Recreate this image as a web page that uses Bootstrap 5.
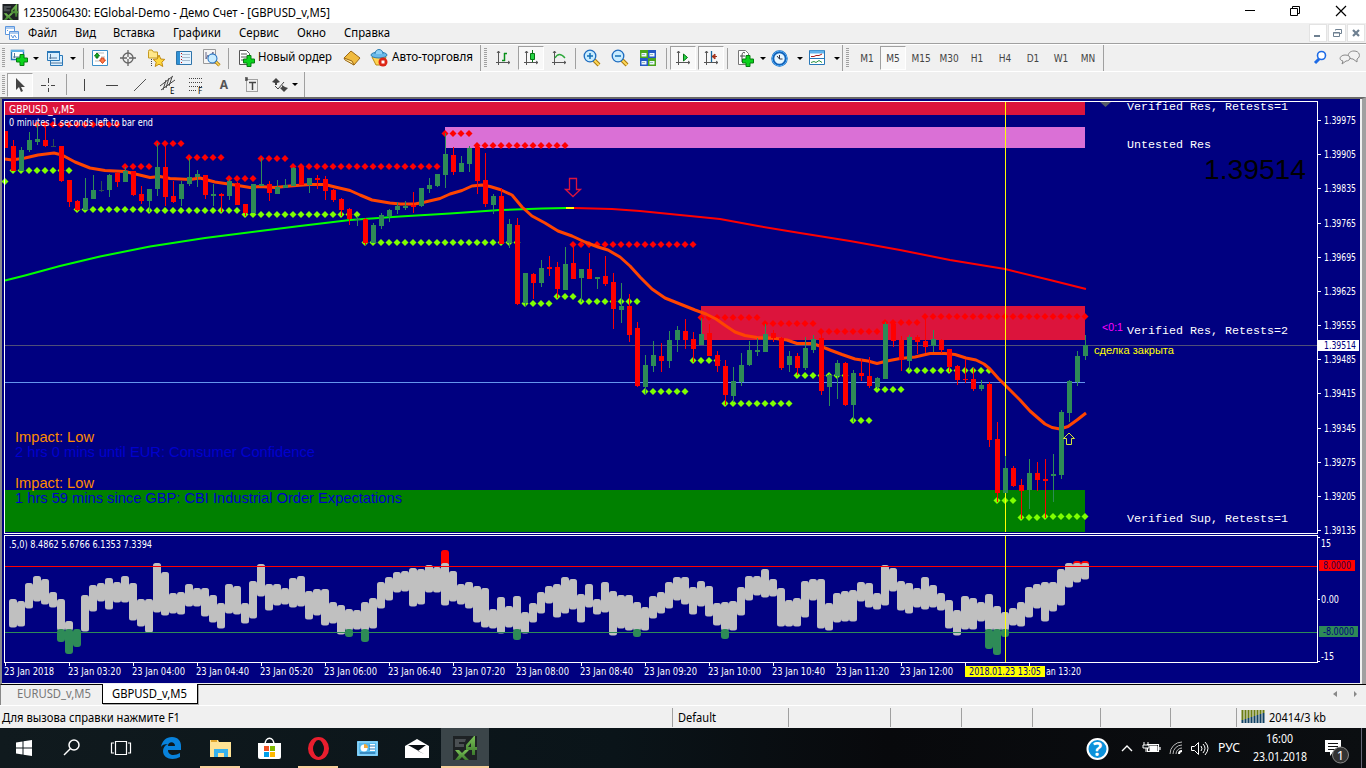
<!DOCTYPE html>
<html lang="ru"><head><meta charset="utf-8"><title>EGlobal-Demo</title>
<link href="https://cdn.jsdelivr.net/npm/bootstrap@5.3.0/dist/css/bootstrap.min.css" rel="stylesheet">
<script src="https://cdn.jsdelivr.net/npm/bootstrap@5.3.0/dist/js/bootstrap.bundle.min.js"></script>
<style>
body{width:1366px;height:768px;overflow:hidden;background:#f0f0f0;color:#000;font:12px/16px "Noto Sans","Open Sans",sans-serif}
svg{display:block;flex:none;overflow:visible}
svg text{white-space:pre}
.titlebar{height:23px;background:#fff;padding-left:2px}
.wbtn{width:46px}
.menubar{height:21px;border-bottom:1px solid #a0a0a0;padding-left:4px}
.mdi{width:18px;height:18px;background:#fff;border:1px solid #e3e3e3;margin-right:1px}
.toolrow{height:27px;border-top:1px solid #fff}
.toolgroup{height:27px;border-right:1px solid #a0a0a0;border-bottom:1px solid #a0a0a0}
.grip{width:3px;height:20px;margin:0 2px;background:repeating-linear-gradient(#a0a0a0 0 1px,#f0f0f0 1px 2px)}
.cell{display:flex;align-items:center;justify-content:center;width:28px;height:24px;flex:none}
.pressed{width:26px;margin:0 1px;background:#f8f8f8;border:1px solid #a0a0a0;border-right-color:#fff;border-bottom-color:#fff}
.sep{width:1px;height:21px;background:#a0a0a0;margin:0 2px;flex:none}
.dd{width:0;height:0;border:3px solid transparent;border-top-color:#000;border-bottom:0;flex:none}
.tf{font:10px "DejaVu Sans Condensed",sans-serif;color:#444}
.frame{height:587px;border-top:2px solid #696969;border-left:2px solid #8a8a8a;border-right:4px solid #a0a0a0;background:#f0f0f0}
.tabstrip{height:21px}
.tab1{width:102px;border-top:1px solid #000;border-left:1px solid #888;padding-left:16px}
.tab2{width:96px;background:#fff;border:solid #000;border-width:0 1px 1px 1px;box-shadow:1px 1px #aaa;height:20px}
.tabrest{border-top:1px solid #000}
.statusbar{height:23px;border-top:1px solid #fff}
.stcell{border-left:1px solid #a0a0a0;height:19px;flex:none}
.taskbar{height:40px;background:linear-gradient(90deg,#101a1e,#0a1419 45%,#08090c 65%,#0b0e11);color:#fff}
.task{height:40px;width:49px;flex:none;display:flex;align-items:center;justify-content:center}
.opened{box-shadow:inset 0 -2px #f8cf9c;width:40px;margin:0 5px 0 4px}
.current{background:#3b4549;box-shadow:inset 0 -2px #f8cf9c;width:48px}
</style></head><body class="d-flex flex-column">
<svg width="0" height="0" class="position-absolute"><defs>
<symbol id="plus" viewBox="0 0 12 12"><path d="M4 0.5h4v3.5h3.5v4H8v3.5H4V8H.5V4H4z" fill="#0bd21c" stroke="#077d10"/></symbol>
<symbol id="axes" viewBox="0 0 16 16"><path d="M3.5 1v14M1 12.5h14M2 3l1.5-2L5 3M13 11l2 1.500-2 1.500" fill="none" stroke="#555"/></symbol>
<symbol id="lens" viewBox="0 0 18 18"><path d="M11 11l5 5" stroke="#a87910" stroke-width="4"/><path d="M11 11l5 5" stroke="#ffd858" stroke-width="2"/><circle cx="7" cy="7" r="5.800" fill="#c8ecff" stroke="#1d6cc0" stroke-width="1.300"/></symbol>
<linearGradient id="leaf" x2="0" y2="1"><stop stop-color="#7ac257"/><stop offset="1" stop-color="#3c7a2c"/></linearGradient>
<symbol id="fx" viewBox="0 0 24 24"><path fill="#1e2224" d="M0 0h24v24H0z"/><path d="M2 3h11l-1 3H6v2h5v3H2z" fill="#4b5053"/><path d="M21 0l-8 9v5h6v5h3v-5h2v-3h-2V0zM18 11h-3l3-4z" fill="url(#leaf)"/><path d="M2 14h4l3 3 3-3h4l-5 5 5 5h-4l-3-3-3 3H2l4-5z" fill="url(#leaf)"/></symbol>
</defs></svg>

<header class="titlebar d-flex align-items-center">
<svg width="17" height="16"><use href="#fx" width="17" height="16"/></svg>
<svg width="330" height="22" class="ms-1"><text x="0" y="16" textLength="307" lengthAdjust="spacingAndGlyphs">1235006430: EGlobal-Demo - Демо Счет - [GBPUSD_v,M5]</text></svg>
<div class="d-flex ms-auto"><svg class="wbtn" height="20"><path d="M17 8.500h10" stroke="#000"/></svg><svg class="wbtn" height="20"><path d="M16.500 6.500h7v7h-7zM18.500 6.500v-2h7v7h-2" fill="none" stroke="#000"/></svg><svg class="wbtn" height="20"><path d="M16 4l10 10M26 4L16 14" stroke="#000" stroke-width="1.200"/></svg></div></header>

<nav class="menubar d-flex align-items-center">
<svg width="16" height="16" fill="#fff" stroke="#5d97de"><path d="M1.500 1.500h9v8h-9z"/><path d="M1 3h10M5.500 6.500h9v8h-9zM5 8h10M7 10l2 3 1.500-3 2 3"/><path d="M3 6l1-1" /></svg>
<svg width="390" height="20"><g font-size="12"><text x="8" y="14" textLength="29" lengthAdjust="spacingAndGlyphs">Файл</text><text x="55" y="14" textLength="21" lengthAdjust="spacingAndGlyphs">Вид</text><text x="93" y="14" textLength="42" lengthAdjust="spacingAndGlyphs">Вставка</text><text x="153" y="14" textLength="48" lengthAdjust="spacingAndGlyphs">Графики</text><text x="219" y="14" textLength="40" lengthAdjust="spacingAndGlyphs">Сервис</text><text x="277" y="14" textLength="29" lengthAdjust="spacingAndGlyphs">Окно</text><text x="324" y="14" textLength="46" lengthAdjust="spacingAndGlyphs">Справка</text></g></svg>
<div class="d-flex ms-auto"><div class="mdi"><svg width="16" height="16"><path d="M4 11h6" stroke="#6e8091" stroke-width="2"/></svg></div><div class="mdi"><svg width="16" height="16" fill="none" stroke="#6e8091"><path d="M4.500 7.500h6v4h-6zM4 8h7M6.500 5.500v-1h6v4h-2"/></svg></div><div class="mdi"><svg width="16" height="16"><path d="M5 5l6 6M11 5l-6 6" stroke="#6e8091" stroke-width="2.200"/></svg></div></div></nav>

<section class="toolrow d-flex">
<div class="toolgroup d-flex align-items-center" style="width:481px"><div class="grip"></div>
<div class="cell" style="width:23px"><svg width="18" height="18"><path d="M1.500 1.500h12v9h-12z" fill="#fff" stroke="#2877b8" stroke-width="1.400"/><path d="M1 2h13" stroke="#5bb0e8" stroke-width="2"/><path d="M4.500 4v5M3 8h7" stroke="#579"/><use href="#plus" x="6" y="5" width="12" height="12"/></svg></div><div class="cell" style="width:11px"><i class="dd"></i></div>
<div class="cell" style="width:28px"><svg width="18" height="18" fill="#d9efff" stroke="#2877b8"><path d="M4.500 6.500h12v10h-12z"/><path d="M1.500 2.500h12v9h-12z"/><path d="M1 3h13" stroke-width="2"/><path d="M4.500 5v5M3 9h8M4 14h12" stroke="#579"/></svg></div><div class="cell" style="width:8px"><i class="dd"></i></div><div style="width:4px"></div><div class="sep"></div>
<div class="cell"><svg width="16" height="16"><path d="M.5.5h15v15H.5z" fill="#fff" stroke="#3b8fca"/><path d="M12 3H4M13 7H9M8 11H3" stroke="#bbb"/><path d="M5 3L2.500 6H4v2h2V6h1.500z" fill="#12ae23" stroke="#0a7515"/><path d="M10.500 13.500L13.500 10H12V8H9v2H7.500z" fill="#ff7a48" stroke="#d2451b"/></svg></div>
<div class="cell"><svg width="16" height="16" fill="none" stroke="#666" stroke-width="1.300"><circle cx="8" cy="8" r="5"/><path d="M8 0v7M8 9v7M0 8h7M9 8h7"/></svg></div>
<div class="cell"><svg width="18" height="18"><path d="M1.500 2.500V9h9V3h-4L5 1H2z" fill="#ffe78a" stroke="#c59a20"/><path d="M4.500 10v7" stroke="#444" stroke-dasharray="1"/><path d="M12 6l1.800 4 4 .4-3 2.800 1 4.300-3.800-2.300-3.800 2.300 1-4.300-3-2.800 4-.4z" fill="#ffd83e" stroke="#c28b12"/></svg></div>
<div class="cell"><svg width="16" height="16"><path d="M.5 1.500h15v13H.5z" fill="#e5f3ff" stroke="#2e74aa"/><path d="M1 2h3v12H1z" fill="#2f91d5"/><path d="M6 4.500h8M6 7.500h8M6 10.500h8" stroke="#a8bccd"/><path d="M5.500 3v10" stroke="#b11" stroke-dasharray="1 2"/></svg></div>
<div class="cell"><svg width="18" height="18"><path d="M.5.500h12v14H.5z" fill="#f5f5f5" stroke="#999"/><path d="M3 3v7l2-4 2 3 3-6v5" fill="none" stroke="#668"/><use href="#lens" x="4" y="4" width="14" height="14"/></svg></div><div class="sep"></div>
<div class="cell" style="width:30px"><svg width="18" height="18"><path d="M2.500 1.500h7l3 3v11h-10z" fill="#fff" stroke="#555"/><path d="M4 5h6M4 8h6M4 11h6" stroke="#555"/><use href="#plus" x="6" y="6" width="12" height="12"/></svg></div>
<svg width="76" height="20"><text x="-3" y="13" textLength="74" lengthAdjust="spacingAndGlyphs">Новый ордер</text></svg>
<div class="cell" style="width:30px"><svg width="18" height="18"><path d="M1 9l7-7 9 7-6 7z" fill="#f0bb3f" stroke="#9b6815"/><path d="M1 9l8 3 2 4-9-5z" fill="#ffe9a0" stroke="#9b6815"/></svg></div>
<div class="cell" style="width:23px"><svg width="18" height="18"><path d="M2 8l4 8h7l3-8z" fill="#ffd450" stroke="#b78b18"/><ellipse cx="9" cy="6" rx="8" ry="3" fill="#69b9e8" stroke="#2d7fb3"/><path d="M5 5c0-6 8-6 8 0" fill="#8fd0f4" stroke="#2d7fb3"/><circle cx="13" cy="13" r="4.500" fill="#dd2617"/><path d="M11.500 11.500h3v3h-3z" fill="#fff"/></svg></div>
<svg width="84" height="20"><text x="2" y="13" textLength="81" lengthAdjust="spacingAndGlyphs">Авто-торговля</text></svg></div>

<div class="toolgroup d-flex align-items-center" style="width:362px"><div class="grip" style="margin-left:3px"></div>
<div class="cell"><svg width="16" height="16"><use href="#axes"/><path d="M9.500 3v8M9 3.500h3M7 10.500h3" stroke="#078f18" stroke-width="1.500"/></svg></div>
<div class="cell pressed"><svg width="16" height="16"><use href="#axes"/><path d="M9.500 0v12" stroke="#087315"/><path d="M7.500 3.500h4v6h-4z" fill="#25d443" stroke="#087315"/></svg></div>
<div class="cell"><svg width="16" height="16"><use href="#axes"/><path d="M4 8q4-7 10 0" fill="none" stroke="#2ca83a" stroke-width="1.300"/></svg></div><div class="sep"></div>
<div class="cell"><svg width="18" height="18"><use href="#lens"/><path d="M4 7h6M7 4v6" stroke="#146fb6" stroke-width="1.500"/></svg></div><div class="cell"><svg width="18" height="18"><use href="#lens"/><path d="M4 7h6" stroke="#146fb6" stroke-width="1.500"/></svg></div>
<div class="cell"><svg width="16" height="16"><path d="M0 0h8v8H0zM8 8h8v8H8z" fill="#4aa51c"/><path d="M8 0h8v8H8zM0 8h8v8H0z" fill="#2459c5"/><path d="M1.500 3h5v3.500h-5zM9.500 3h5v3.500h-5zM1.500 11h5v3.500h-5zM9.500 11h5v3.500h-5z" fill="#eef7ff"/><path d="M2 4.500h3M10 4.500h3M2 12.500h3M10 12.500h3" stroke="#9bb"/></svg></div><div class="sep ms-1"></div>
<div class="cell pressed"><svg width="16" height="16"><use href="#axes"/><path d="M8.500 4v7l4-3.500z" fill="#25d443" stroke="#087315"/></svg></div>
<div class="cell pressed"><svg width="16" height="16"><use href="#axes"/><path d="M8.500 1v11" stroke="#17669a" stroke-width="1.300"/><path d="M9 6.500h5M12 4l-3 2.500L12 9z" fill="#d42" stroke="#9c321c"/></svg></div><div class="sep"></div>
<div class="cell" style="width:30px"><svg width="18" height="18"><path d="M2.500 1.500h7l3 3v11h-10z" fill="#fff" stroke="#777"/><path d="M9 4c-3-2-3 2-3 4v5M4 7h5" fill="none" stroke="#444"/><use href="#plus" x="6" y="6" width="12" height="12"/></svg></div><div class="cell" style="width:5px"><i class="dd"></i></div>
<div class="cell" style="width:33px"><svg width="17" height="17" style="margin-right:4px"><circle cx="8.500" cy="8.500" r="6.700" fill="#e7f6ff" stroke="#1262b9" stroke-width="3"/><circle cx="8.500" cy="8.500" r="7.400" fill="none" stroke="#50acf5"/><path d="M8.500 5v4h3M6 6l2.500 3" stroke="#334" fill="none"/></svg></div><div class="cell" style="width:4px"><i class="dd"></i></div>
<div class="cell" style="width:33px"><svg width="16" height="16" style="margin-right:4px"><path d="M.5.5h15v14H.5z" fill="#fff" stroke="#2877b8"/><path d="M1 2h14" stroke="#62b4ec" stroke-width="3"/><path d="M2 6.500h3l2-1h3l3-1.500" fill="none" stroke="#a22"/><path d="M1 8.500h14" stroke="#2877b8"/><path d="M2 12.500l3-1 2 1 3-2 3 2" fill="none" stroke="#2a943e"/></svg></div><div class="cell" style="width:4px"><i class="dd"></i></div></div>
<div class="toolgroup d-flex align-items-center tf" style="width:261px"><div class="grip" style="margin-left:3px"></div><div class="cell ps-1">M1</div><div class="cell pressed">M5</div><div class="cell">M15</div><div class="cell">M30</div><div class="cell">H1</div><div class="cell">H4</div><div class="cell">D1</div><div class="cell">W1</div><div class="cell" style="width:26px">MN</div></div>
<div class="d-flex ms-auto align-items-center pe-1"><svg width="16" height="16" fill="none"><path d="M1 13l5-5" stroke="#1d6be6" stroke-width="3"/><circle cx="7.500" cy="5.500" r="4" fill="#fff" stroke="#1d6be6" stroke-width="1.600"/></svg><svg width="24" height="20" class="ms-2" fill="#f2f2f2" stroke="#888"><path d="M15 11l4 3v-3c4-2 3-8-3-8-7 0-8 8-1 8z"/><path d="M4 16l1-3c-5-1-3-6 2-6 7 0 6 6 1 6z"/></svg></div></section>

<section class="toolrow d-flex" style="height:26px"><div class="toolgroup d-flex align-items-center" style="width:305px;height:26px"><div class="grip"></div>
<div class="cell pressed ms-0"><svg width="16" height="16"><path d="M4 1v12l3-3 2 5 2-1-2-4h4z" fill="#444"/></svg></div>
<div class="cell"><svg width="16" height="16" stroke="#444"><path d="M8.500 1v5M8.500 11v4M1 8.500h5M11 8.500h4M8 8.500h1"/></svg></div><div style="width:2px"></div><div class="sep"></div>
<div class="cell" style="width:29px"><svg width="16" height="16"><path d="M8.500 2v12" stroke="#444"/></svg></div><div class="cell"><svg width="16" height="16"><path d="M2 8.500h12" stroke="#444"/></svg></div><div class="cell"><svg width="16" height="16"><path d="M2 14L14 2" stroke="#555"/></svg></div>
<div class="cell"><svg width="16" height="18" stroke="#444"><path d="M0 10L13 0M1 14L15 4M3 14L6 4M6 12L9 2M9 10l3-9"/><text x="10" y="18" font-size="8" stroke="none">E</text></svg></div>
<div class="cell"><svg width="16" height="18" stroke="#444"><path d="M1 2.500h14M1 6.500h14M1 10.500h14M1 14.500h8" stroke-dasharray="1"/><text x="10" y="18" font-size="8" stroke="none">F</text></svg></div>
<div class="cell fw-bold" style="color:#555">A</div><div class="cell"><svg width="16" height="16"><path d="M2.500 2.500h11v12h-11z" fill="none" stroke="#555" stroke-dasharray="1"/><path d="M5 5.500h7M8.500 5v8M1 1h2v2H1" stroke="#444" stroke-width="1.500" fill="none"/></svg></div>
<div class="cell"><svg width="16" height="16" fill="#444"><path d="M0 5l4-4 4 4-3 1v2H3V6zM8 11l2-1V8l3 2 3 1-4 4z"/><path d="M3 9l3 3 6-7" fill="none" stroke="#444"/></svg></div><div class="cell" style="width:10px;margin-left:-4px"><i class="dd"></i></div></div></section>

<main class="frame"><svg id="chart" width="1358" height="584" viewBox="2 99 1358 584" font-family="DejaVu Sans Condensed,sans-serif" font-size="10"></svg></main>

<div class="tabstrip d-flex"><div class="tab1"><svg width="80" height="18"><text x="0" y="13" fill="#777" textLength="74" lengthAdjust="spacingAndGlyphs">EURUSD_v,M5</text></svg></div><div class="tab2"><svg width="90" height="18"><text x="9" y="14" textLength="75" lengthAdjust="spacingAndGlyphs">GBPUSD_v,M5</text></svg></div><div class="tabrest flex-grow-1 d-flex justify-content-end"><svg width="36" height="18" fill="#888"><path d="M7 6v6L3 9zM24 6v6l3-3z"/></svg></div></div>
<div class="statusbar d-flex align-items-center"><svg width="672" height="20"><text x="2" y="15" textLength="178" lengthAdjust="spacingAndGlyphs">Для вызова справки нажмите F1</text></svg><div class="stcell" style="width:116px"><svg width="80" height="18"><text x="5" y="14" textLength="38" lengthAdjust="spacingAndGlyphs">Default</text></svg></div><div class="stcell" style="width:102px"></div><div class="stcell" style="width:71px"></div><div class="stcell" style="width:71px"></div><div class="stcell" style="width:68px"></div><div class="stcell" style="width:70px"></div><div class="stcell" style="width:66px"></div><div class="stcell"><svg width="125" height="18"><g id="signal"></g><text x="32" y="14" textLength="57" lengthAdjust="spacingAndGlyphs">20414/3 kb</text></svg></div></div>

<footer class="taskbar d-flex">
<div class="task" style="width:48px"><svg width="16" height="16" fill="#fff"><path d="M0 2.500l6.500-1v6H0zM7.500 1.300L16 0v7.500H7.500zM0 8.500h6.500v6L0 13.500zM7.500 8.500H16V16l-8.500-1.300z"/></svg></div>
<div class="task" style="width:48px"><svg width="18" height="18" fill="none" stroke="#fff" stroke-width="1.500"><circle cx="11" cy="6" r="5"/><path d="M7.500 9.500L1 16"/></svg></div>
<div class="task" style="width:49px"><svg width="20" height="16" fill="none" stroke="#fff" stroke-width="1.200"><path d="M4.500 1.500h11v13h-11zM3 3H.5v10H3M17 3h2.500v10H17"/></svg></div>
<div class="task" style="width:51px"><svg width="20" height="22" viewBox="0 0 20 22"><path d="M0 10C1 4 5 0 11 0c6 0 9 4 9 9v4H7c0 6 7 6 12 3v4c-7 4-17 2-17-6 0-3 2-6 5-7-4 0-6 1-7 3zm7-1h7c0-5-7-5-7 0z" fill="#0882dc"/></svg></div>
<div class="task opened"><svg width="21" height="18"><path d="M0 1h8l1 2h12v15H0z" fill="#ffe394"/><path d="M1 1h6v2H1z" fill="#e2a72c"/><path d="M4 18v-8h14v8h-4v-4H8v4z" fill="#36b2ed"/></svg></div>
<div class="task"><svg width="23" height="22"><path d="M7 8c0-9 9-9 9 0" fill="none" stroke="#fff" stroke-width="1.500"/><path d="M0 6h23v14q0 2-2 2H2q-2 0-2-2z" fill="#fff"/><path d="M6 9h5v5H6z" fill="#ef5023"/><path d="M12 9h5v5h-5z" fill="#7fb900"/><path d="M6 15h5v5H6z" fill="#009fe9"/><path d="M12 15h5v5h-5z" fill="#ffb800"/></svg></div>
<div class="task opened"><svg width="23" height="23"><ellipse cx="11.500" cy="11.500" rx="8" ry="9" fill="none" stroke="#e91e2e" stroke-width="5"/><ellipse cx="11.500" cy="11.500" rx="5" ry="8.500" fill="#0a1419"/></svg></div>
<div class="task"><svg width="21" height="15"><path d="M0 0h21v15H0z" fill="#55b8ec"/><path d="M1 1h19v13H1z" fill="none" stroke="#a8e1ff"/><circle cx="7" cy="7" r="3.500" fill="#fff"/><path d="M7 7V3a4 4 0 014 4z" fill="#f4aa39"/><path d="M13 3h5v7h-5z" fill="#fff"/><path d="M12 5h6M12 8h6" stroke="#2b78b5"/><path d="M3 12h15" stroke="#1e5d96"/></svg></div>
<div class="task"><svg width="24" height="19"><path d="M0 7l12-7 12 7v12H0z" fill="#fff"/><path d="M3 6h18l-8 6 6 3z" fill="#0a1014"/></svg></div>
<div class="task current"><svg width="24" height="24"><use href="#fx" width="24" height="24"/></svg></div>
<svg class="ms-auto" width="286" height="40" fill="none" stroke="#fff"><circle cx="17.500" cy="21" r="10" fill="#0c91da" stroke-width="2"/><text x="17.500" y="28" text-anchor="middle" font-size="19" font-weight="bold" fill="#fff" stroke="none">?</text><path d="M42 23l5-5 5 5" stroke-width="1.400"/><path d="M67.500 16.500h11v7h-11zM80 19v3" stroke-width="1.200"/><path d="M70 18h7v5h-7z" fill="#fff"/><path d="M64 14v3M68 14v3M63 17h6v3h-6zM66 20v4" fill="#0a1014"/><path d="M90 26a12 12 0 0112-12M93 26a9 9 0 019-9M96 26a6 6 0 016-6" stroke="#bbb"/><path d="M99 26a3 3 0 013-3" stroke-width="2"/><path d="M111.500 18.500h3l4-4v12l-4-4h-3zM121 18q2 3 0 5M123 16q4 4 0 9M125 14q6 6 0 13"/><g fill="#fff" stroke="none"><text x="138" y="24" textLength="22" lengthAdjust="spacingAndGlyphs">РУС</text><text x="186" y="15" textLength="27" lengthAdjust="spacingAndGlyphs">16:00</text><text x="173" y="33" textLength="54" lengthAdjust="spacingAndGlyphs">23.01.2018</text></g><path d="M245 12h16v12h-8l-3 4v-4h-5z" fill="#fff" stroke="none"/><path d="M248 15.500h10M248 18.500h10M248 21.500h7" stroke="#111"/><circle cx="260.500" cy="27" r="8" fill="#333" stroke="#888"/><text x="260.500" y="32" text-anchor="middle" fill="#fff" stroke="none" font-size="13">1</text><path d="M281.500 0v40" stroke="#667"/></svg></footer>

<script>
// columns: colour, high, body top, body bottom, low (one entry per 5-minute bar)
const candles=`r131,131,148,148 r140,146,171,171 g147,150,171,171 g132,140,150,152 g124,139,142,145 r124,140,146,147 d139,146,147,147 r146,146,181,182 r180,180,202,207 r200,201,210,211
g178,198,210,210 g175,190,199,199 d181,190,191,192 g174,175,190,197 r172,173,182,187 g167,171,182,182 r171,171,195,196 r186,194,201,204 g189,189,201,212 g143,167,189,196
r143,167,197,206 r181,196,202,203 g181,184,199,206 g158,177,184,186 g170,174,177,187 r175,175,195,199 g184,194,196,206 r193,194,196,212 g179,181,196,200 r182,183,205,205
r204,204,213,216 g184,184,213,213 g158,184,186,186 r181,184,193,201 g180,187,194,194 g179,185,188,188 g167,168,186,186 r166,167,185,185 g178,178,185,193 r175,178,180,189
r176,179,191,200 r189,190,200,202 r198,199,210,216 r208,209,219,225 g216,219,220,226 r218,219,243,245 g223,225,243,243 g213,215,226,229 g209,210,216,222 g202,206,210,214
g201,206,208,210 r192,205,207,213 g188,188,206,207 g178,185,189,193 g174,174,186,187 g133,154,175,188 r147,155,172,175 g156,163,172,172 g146,148,164,172 r145,147,181,194
r153,180,204,207 g194,196,205,214 r188,196,244,244 g219,224,243,248 r218,225,304,305 g273,273,303,306 r273,274,283,299 g260,268,283,287 r256,267,269,276 r262,267,289,298
g247,264,290,290 r244,263,279,279 g269,269,278,302 r253,269,279,279 g277,277,279,289 r256,276,284,286 r273,282,309,329 g283,306,310,323 r294,306,335,342 r322,328,386,387
g355,365,387,394 g341,355,366,372 r343,356,361,372 g331,340,361,368 g326,330,340,352 r319,331,340,349 r332,339,349,362 g318,334,345,345 r324,333,356,356 r351,355,366,372
r360,366,395,405 g367,381,396,402 g353,365,382,386 g341,350,365,366 g338,350,352,356 g324,334,352,352 r330,333,338,342 r337,338,368,370 g351,356,365,372 r353,356,368,375
g337,348,368,370 g335,339,350,353 r332,338,391,395 g374,375,387,406 g360,363,376,399 r362,363,405,406 g370,373,405,422 r359,373,376,381 r357,376,386,388 g377,378,387,389
g322,324,379,379 r322,324,341,347 r336,340,360,371 g335,337,361,370 r335,337,342,354 r317,341,347,353 g330,339,346,352 r339,340,350,353 r349,349,367,372 r365,366,380,385
r359,379,380,383 r368,379,389,391 g380,385,389,391 r382,384,440,447 r422,439,493,502 g456,468,493,493 r466,468,486,487 r479,485,491,519 g459,473,490,509 r462,473,480,491
r459,479,481,518 g454,474,476,502 g410,412,475,479 g380,381,413,422 g351,356,382,386 g335,345,356,360`.split(/\s+/);
// support and resistance dots: first bar, last bar, y
const resist=[[4,14,124],[19,22,143],[23,27,157],[15,18,166],[28,31,178],[32,35,158],[36,54,166],[55,58,133],[59,70,145],[71,86,244],[87,94,317],[95,101,323],[102,109,331],[110,114,322],[115,135,316]];
const support=[[0,0,181],[1,8,170],[9,17,209],[18,29,210],[30,44,214],[45,64,242],[65,68,303],[69,71,296],[72,79,301],[80,85,391],[86,89,360],[90,98,403],[99,105,375],[106,108,420],[109,112,389],[113,123,370],[124,126,500],[127,129,517],[130,135,516]];
// oscillator ranges, bar 1 onward: top-bottom
const osc=`599-627 601-626 583-608 576-601 579-604 592-607 599-630 621-630 0-0 595-631 585-611 583-601 578-609 582-602 576-602 583-620 599-626 599-632 563-612 572-615 593-613 592-614 584-606 588-606 588-616 595-622 603-628 584-613 586-614 603-623 581-618 564-596 584-610 584-605 588-604 578-607 576-606 591-619 589-615 589-625 602-623 605-634 609-630 610-629 602-630 598-628 582-608 577-600 572-592 571-591 568-606 569-604 565-592 567-592 563-605 571-601 584-604 582-608 586-622 588-627 609-628 597-633 606-627 596-630 612-633 603-622 592-613 586-603 584-617 577-613 579-609 594-622 584-607 599-614 582-612 591-635 595-628 595-630 602-630 607-630 596-618 592-613 582-608 577-600 577-604 587-614 581-606 586-616 603-625 602-630 601-630 587-615 576-600 576-595 569-597 579-596 588-626 600-626 598-626 581-617 579-600 579-628 603-630 593-622 591-621 590-621 582-601 583-607 593-609 565-605 568-591 581-610 583-613 588-607 577-609 585-607 593-610 600-628 610-635 596-629 598-629 602-621 594-630 606-630 612-630 608-625 602-626 587-617 584-608 582-621 582-611 569-605 563-587 563-582 563-579`.split(' ');
const low={7:642,8:654,9:647,43:637,45:642,64:640,79:637,90:639,123:649,124:655,125:637}, high={55:550,134:561,135:561};
const X=i=>5+8*i; let s='';
const rect=(x,y,w,h,f,e='')=>s+=`<rect x="${x}" y="${y}" width="${w}" height="${h}" fill="${f}" ${e}/>`;
const text=(x,y,t,w,f='#fff',e='')=>s+=`<text x="${x}" y="${y}" fill="${f}" textLength="${w}" lengthAdjust="spacingAndGlyphs" ${e}>${t}</text>`;
const line=(p,c,w)=>s+=`<polyline points="${p}" fill="none" stroke="${c}" stroke-width="${w}" stroke-linejoin="round"/>`;
rect(2,99,1358,584,'#000080');
s+='<g shape-rendering="crispEdges">';
rect(5,102,1080,13,'#dc143c');rect(445,127,640,21,'#da70d6');rect(701,306,384,34,'#dc143c');rect(5,490,1080,42,'#008000');
rect(5,345,1312,1,'#4f4f78');rect(5,382,1080,1,'#6495ed');
s+='</g>';
const dots=(a,c)=>a.forEach(([m,n,y])=>{for(let i=m;i<=n;i++)s+=`<path d="M${X(i)-3.500} ${y+.5}l3.500-3.500 3.500 3.500-3.500 3.500z" fill="${c}"/>`});
dots(resist,'#ff0000');dots(support,'#7fff00');
line('5,280.5 25,275.5 60,266 100,256.5 150,246.5 205,238 260,231 300,226 350,220 400,216.5 450,213.5 500,210 542,208.5 567,208','#00ff00',2);
line('566,208 574,208','#ffff00',2);
line('574,208 612,209 640,211 680,215 720,219 758,226 800,233 850,241 900,250 950,260 1005,269 1050,280 1086,289','#ff0000',2);
line('5,159 12,160 25,158 38,155 54,153 62,155 75,162 90,168 105,170.5 125,171.5 150,177.5 160,176.5 170,178.5 190,179.5 200,178 215,182 235,185 250,187.5 260,186.5 275,187.5 290,186 310,184.5 325,184.5 335,187 350,190.5 360,195 372,200 390,203 400,204 415,204 425,202 440,198.5 450,194 462,190.5 472,186 482,185 490,186.5 500,189.5 512,195 522,207 532,216 545,223 558,231 572,236 585,242 598,247 608,250 620,257 630,266 640,277 652,289 665,298 675,302 685,306 695,310 706,314 716,319 726,326 735,332 745,335.5 757,337.5 772,338 787,340 797,343.5 812,343.5 820,346 830,350 842,354.5 855,359 868,361 877,363.5 887,361 900,358.5 915,357 930,353.5 945,353.5 955,354.5 966,358 976,360 984,364 990,369 998,378 1010,390 1020,400 1030,411 1038,418 1045,424 1052,427.5 1060,429 1068,426.5 1077,420 1086,413','#ff4500',3);
s+='<g shape-rendering="crispEdges">';
rect(1005,102,1,430,'#ffff00');
candles.forEach((c,i)=>{const f={r:'#ff0000',g:'#2e8b57',d:'#2f4f4f'}[c[0]],[h,a,b,l]=c.slice(1).split(',').map(Number),x=X(i);rect(x,h,1,l-h,f);const w=i?5:3;rect(i?x-2:x,a,w,Math.max(1,b-a),f)});
s+='</g>';
osc.forEach((o,j)=>{const i=j+1,[a,b]=o.split('-').map(Number);if(high[i])rect(X(i)-4,high[i],8,18,'#ff0000','rx="3"');if(a)rect(X(i)-4,a,8,b-a+.5,'#c0c0c0','rx="2.5"');if(low[i])rect(X(i)-4,629,8,low[i]-629,'#2e8b57','rx="3"')});
s+='<g shape-rendering="crispEdges">';
rect(5,566,1312,1,'#ff0000');rect(5,632,1312,1,'#2e8b57');rect(1005,536,1,126,'#ffff00');
rect(4,101,1314,1,'#fff');rect(4,533,1314,1,'#fff');rect(4,101,1,433,'#fff');rect(1317,101,1,433,'#fff');
rect(4,535,1314,1,'#fff');rect(4,662,1314,1,'#fff');rect(4,535,1,128,'#fff');rect(1317,535,1,128,'#fff');
for(let k=0;k<13;k++)rect(1318,Math.round(120+k*34.17),3,1,'#fff');
for(let k=0;k<17;k++)rect(5+64*k,662,1,4,'#fff');
rect(1318,537,2,1,'#fff');rect(1318,599,2,1,'#fff');rect(1318,661,2,1,'#fff');
rect(1318,340,41,11,'#fff');rect(1319,560,36,11,'#ff0000');rect(1319,626,39,11,'#2e8b57');
s+='</g>';
for(let k=0;k<13;k++)text(1324,Math.round(124+k*34.17),(1.39975-k*.0007).toFixed(5),32);
text(1324,349,'1.39514',32,'#000080');
text(1321,547,'15',10);text(1321,603,'0.00',18);text(1321,660,'-15',13);text(1323,569,'8.0000',28,'#300050');text(1323,635,'-8.0000',31,'#000080');
['2018','03:20','04:00','04:40','05:20','06:00','06:40','07:20','08:00','08:40','09:20','10:00','10:40','11:20','12:00'].forEach((t,k)=>text(4+64*k,675,'23 Jan '+t,k?53:50));
text(1046,675,'an 13:20',35);
rect(965,666,80,11,'#ffff00','shape-rendering="crispEdges"');text(969,675,'2018.01.23 13:05',72,'#000080');
text(9,113,'GBPUSD_v,M5',66);text(9,126,'0 minutes 1 seconds left to bar end',144);text(9,548,'.5,0) 8.4862 5.6766 6.1353 7.3394',143);
const A='font-family="Liberation Sans,sans-serif" ',M='font-family="Liberation Mono,monospace" font-size="11.7"';
text(15,442,'Impact: Low',79,'#ff8c00',A+'font-size="14.500"');text(15,488,'Impact: Low',79,'#ff8c00',A+'font-size="14.500"');
text(15,457,'2 hrs 0 mins until EUR: Consumer Confidence',300,'#0000cd',A+'font-size="14.500"');text(15,503,'1 hrs 59 mins since GBP: CBI Industrial Order Expectations',387,'#0000cd',A+'font-size="14.500"');
text(1204,179,'1.39514',102,'#000',A+'font-size="27"');
text(1127,110,'Verified Res, Retests=1',161,'#fff',M);text(1127,148,'Untested Res',84,'#fff',M);text(1127,334,'Verified Res, Retests=2',161,'#fff',M);text(1127,522,'Verified Sup, Retests=1',161,'#fff',M);
text(1102,331,'&lt;0:1',21,'#ff00ff',A+'font-size="11"');text(1094,354,'сделка закрыта',80,'#ffff00',A+'font-size="11"');
s+='<path d="M1100 102h11l-5.500 5z" fill="#555b66"/><path d="M569.500 178.500v11h-4l7.500 7 7.500-7h-4v-11z" fill="none" stroke="#dc143c" stroke-width="1.300"/><path d="M1066.500 444.500v-6h-3l5.500-5.500 5.500 5.500h-3v6z" fill="none" stroke="#d5e83a"/>';
document.getElementById('chart').innerHTML=s;
let g='';for(let i=0;i<8;i++){const y=11-i;g+=`<path d="M${5.5+3*i} 2v${y-1}" stroke="#6b7d13" stroke-width="2"/><path d="M${5.5+3*i} ${y+1}V15" stroke="#114264" stroke-width="2"/>`}
document.getElementById('signal').innerHTML=g;
</script></body></html>
